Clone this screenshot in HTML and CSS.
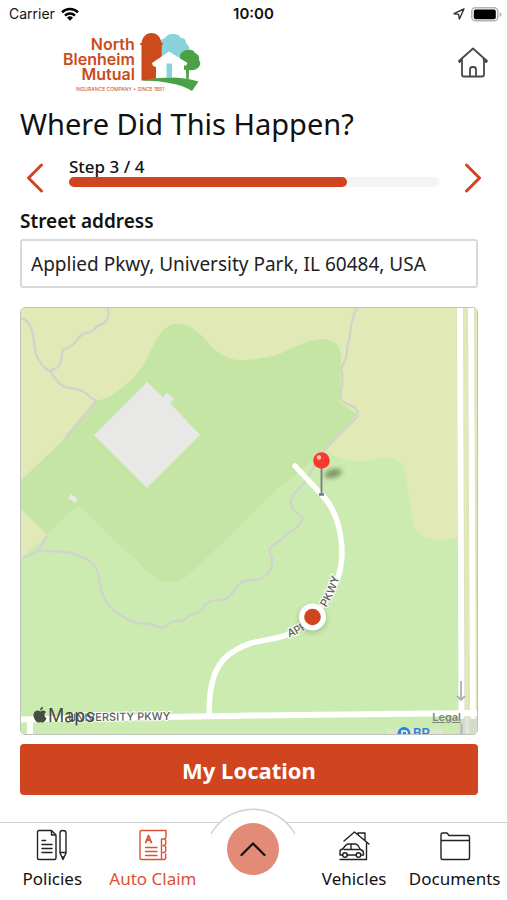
FILE: index.html
```html
<!DOCTYPE html>
<html lang="en">
<head>
<meta charset="utf-8">
<meta name="viewport" content="width=device-width, initial-scale=1">
<title>Auto Claim - Where Did This Happen?</title>
<link rel="stylesheet" href="styles.css">
</head>
<body>
<div class="app">
  <div class="status">
    <div class="status-left">
      <span>Carrier</span>
      <svg width="18" height="14" viewBox="0 0 18 14" aria-hidden="true">
        <g fill="none" stroke="#000" stroke-width="2.5"><path d="M1 5.4A11.4 11.4 0 0 1 17 5.4"/><path d="M4 8.6A7.2 7.2 0 0 1 14 8.6"/></g>
        <path d="M9 13.8 6 10.8a4.3 4.3 0 0 1 6 0z" fill="#000"/>
      </svg>
    </div>
    <span class="status-time">10:00</span>
    <div class="status-right">
      <svg width="12" height="12" viewBox="0 0 12 12" aria-hidden="true"><path d="M11 1 1 5.7l4.6.7.8 4.6z" fill="none" stroke="#333" stroke-width="1.4" stroke-linejoin="round"/></svg>
      <svg width="31" height="15" viewBox="0 0 31 15" aria-hidden="true"><rect x=".8" y=".8" width="26" height="13" rx="3.6" fill="#fff" stroke="#b4b4b4" stroke-width="1.5"/><rect x="2.8" y="2.6" width="22" height="9.6" rx="1.8"/><path d="M28.6 5v5q2-.8 2-2.500t-2-2.500z" fill="#b4b4b4"/></svg>
    </div>
  </div>

  <header class="header">
    <a class="logo" href="#" aria-label="North Blenheim Mutual">
      <span class="logo-name">North<br>Blenheim<br>Mutual</span>
      <svg class="logo-art" width="62" height="59" viewBox="0 0 62 59" aria-hidden="true">
        <path d="M21 28V10q-1-4 4-5 2-4 8-4 6 0 8 4 5 0 5 5 4 3 3 8l-4 10z" fill="#8ad3da"/>
        <path d="M1.500 47.500V12H.3v-2H1.500C2.500 3 7 0 11.500 0S20.500 3 21.500 10h1.200v2H21.700v35z" fill="#cb4b1b"/>
        <path d="M40 22q3-5 7-5 6-1 8 3 5 2 4 7 3 4-1 8-4 3-9 2l-.3 9.500h-2.400L46 37q-4 0-6-3z" fill="#4aa147"/>
        <path d="M29 18.500 47.500 30l-1.500 3-2-1v14.500H16V34l-3-1-1-3z" fill="#fff"/>
        <path d="M26.500 30.500h5.500v14h-5.500z" fill="#8ad3da"/>
        <path d="M1.500 47.500q14-3 28-3 16 0 29 4L52 58Q36 48 1.500 47.500z" fill="#4aa147"/>
      </svg>
      <span class="logo-tag">INSURANCE COMPANY • SINCE 1851</span>
    </a>
    <a class="home" href="#" aria-label="Home">
      <svg width="30" height="32" viewBox="0 0 30 32" fill="none" stroke="#484848" stroke-width="1.800" stroke-linecap="round" stroke-linejoin="round" aria-hidden="true">
        <path d="M4 12.500 1.500 15 1 14 15 1.500 29 14l-1 1-2.500-2.500"/><path d="M4 14v13.500q0 2 2 2h18q2 0 2-2V14"/><path d="M12 29v-6.500q0-2.500 2.500-2.500h1q2.500 0 2.500 2.500V29"/>
      </svg>
    </a>
  </header>

  <main class="main">
    <h1 class="title">Where Did This Happen?</h1>

    <div class="steps">
      <button class="step-btn" type="button" aria-label="Previous step">
        <svg width="18" height="30" viewBox="0 0 18 30" aria-hidden="true"><path d="M15.500 2 2.500 15l13 13"/></svg>
      </button>
      <div class="step-info">
        <span class="step-label" id="step">Step 3 / 4</span>
        <div class="track" role="progressbar" aria-labelledby="step" aria-valuemin="0" aria-valuemax="4" aria-valuenow="3"><div class="fill" style="width:75%"></div></div>
      </div>
      <button class="step-btn" type="button" aria-label="Next step">
        <svg width="18" height="30" viewBox="0 0 18 30" aria-hidden="true"><path d="m2.500 2 13 13-13 13"/></svg>
      </button>
    </div>

    <label class="label" for="address">Street address</label>
    <input class="address" id="address" type="text" value="Applied Pkwy, University Park, IL 60484, USA">

    <div class="map">
      <svg class="map-art" viewBox="21 308 456 426" preserveAspectRatio="xMidYMid slice" role="img" aria-label="Map of Applied Pkwy">
        <defs>
          <filter id="soft" x="-50%" y="-50%" width="200%" height="200%"><feGaussianBlur stdDeviation="2.500"/></filter>
          <path id="pkwy" d="M289 637.500C322 627 340 592 344 552"/>
          <path id="uni" d="M68 721.500 200 719.500"/>
        </defs>
        <rect x="0" y="300" width="507" height="450" fill="#e1eab6"/>
        <path d="M21 480.500 66 437 96 401Q113 398 133 378C148 362 152 345 160 334Q168 323 178 323.500C196 325 206 341 214 349C230 363 246 361 262 358C288 355 300 339 324 339Q341 341 341 358L340 402 357 414 325 452 290 560 100 610 47 535 21 509z" fill="#c4e5a4"/>
        <path d="M21 558 47 535 78 505 148 572Q166 590 188 576L280 487 325 450C336 458 352 465 374 459Q403 453 406 473L411 512Q413 540 440 540L458 538V734H21z" fill="#ccebb0"/>
        <path d="M21 719 477 714V734H21z" fill="#ccebb0"/>
        <path d="M463 717h14v17h-14z" fill="#e2e3dc"/>
        <path d="m147 382 16 15 4-4 7 6-4 4 30 32-53 53-53-53z" fill="#e8e8e7"/>
        <path d="m68 498 3-4 7 5-3 4z" fill="#e8e8e7"/>
        <g fill="none" stroke-linejoin="round" stroke-linecap="round">
          <path id="trail" stroke="#d0d4ca" stroke-width="2.400" d="M21 318C36 323 33 345 36 354Q40 366 51 372C59 384 60 387 75 389Q84 390 90 397L96 401 66 437M51 370C66 367 59 353 64 349C78 347 76 334 86 333Q93 332 97 326C108 323 109 318 108 308M357 308Q352 318 351 326C351 336 347 343 347 352Q346 361 341 368Q344 376 341 390C338 405 349 403 355 408Q361 413 355 419L325 449 314 466 305 482C299 489 287 497 292 507Q295 513 302 516Q304 525 285 535C278 546 268 543 270 553Q276 567 266 575Q261 580 250 580L242 582C235 586 233 598 222 600Q209 599 204 606Q199 615 193 614C188 614 187 620 181 621Q171 620 167 626Q161 630 154 625Q147 623 136 623C119 616 106 607 101 590C99 580 99 570 94 565C77 549 55 551 38 551L23 558M38 551 47 536"/>
          <g stroke="#d4dcc5" stroke-width="7">
            <path d="M460 304 461.500 738M471 304 473 738"/>
          </g>
          <g stroke="#fff" stroke-width="6">
            <path d="M295 466 321 494C341 513 348 556 336 582Q323 613 293 632C275 642 254 638 236 650C216 660 209 681 209 714" stroke-width="5.500"/>
            <path d="M18 719.500 255 715.500 480 713M30 720V738M460 304 461.500 716M471 304 473 716"/>
          </g>
        </g>
        <path d="M461 681v19m-4-4 4 4 4-4M461.500 724v12" fill="none" stroke="#b2aeb1" stroke-width="1.800"/>
        <text class="road"><textPath href="#pkwy">APPLIED PKWY</textPath></text>
        <text class="road"><textPath href="#uni">UNIVERSITY PKWY</textPath></text>
        <rect x="387" y="729" width="56" height="8" fill="#dfe5d0"/>
        <circle cx="404" cy="733.500" r="6.500" fill="#2e83e0"/>
        <path d="M402 737v-6h3q2 0 2 2t-2 2h-3" fill="none" stroke="#fff" stroke-width="1.500"/>
        <text class="poi" x="413" y="738">BP</text>
        <ellipse cx="333" cy="473.500" rx="9" ry="4" transform="rotate(-15 333 473)" fill="#52683c" opacity=".7" filter="url(#soft)"/>
        <path d="M321.500 466v28" stroke="#777d83" stroke-width="1.800"/><path d="M319 494.500h5" stroke="#707982" stroke-width="2.400"/>
        <circle cx="321.500" cy="460.500" r="8.300" fill="#fb392f"/><circle cx="319" cy="457.500" r="2.200" fill="#ffc4bf"/>
        <circle cx="312.500" cy="619" r="14" fill="#718663" opacity=".4" filter="url(#soft)"/>
        <circle cx="312.500" cy="617" r="13.500" fill="#fff"/><circle cx="312.500" cy="617" r="8.300" fill="#d0451f"/>
        <g fill="#454d40">
          <path d="M40.500 711.500Q43.500 709.500 46 712Q42.500 715 46.500 718.500Q44 724 40.500 722Q37 724 34.500 719C31.500 712.500 36 708.500 40.500 711.500zM40 710.500Q40 707.500 43 706.800Q43 710 40 710.500z"/>
          <text class="brand" x="48" y="722">Maps</text>
        </g>
      </svg>
      <a class="legal" href="#">Legal</a>
    </div>

    <button class="primary" type="button">My Location</button>
  </main>

  <nav class="nav" aria-label="Main">
    <a class="tab" href="#">
      <svg width="32" height="32" viewBox="0 0 32 32" aria-hidden="true">
        <path d="M15.500 1.500H3q-1.500 0-1.500 1.500v26q0 1.500 1.500 1.500h15.500q1.500 0 1.500-1.500V6zM15.500 1.500V6H20M6 11.500h3.500M6 15.500h10M6 19.500h10M6 23.500h10M24 24V4q0-2.500 3-2.500T30 4v20l-3 6.500zM24 23.500h6M26 28h2"/>
      </svg>
      <span>Policies</span>
    </a>
    <a class="tab active" href="#">
      <svg width="32" height="32" viewBox="0 0 32 32" aria-hidden="true">
        <path d="M24.500 30.500H4.500q-1.500 0-1.500-1.500V3q0-1.500 1.500-1.500H29V8.500L27.500 10h-3v20.500M27.500 10l1.200 1v4l-1.200 1.500h-1.500M27.500 16.500l1.200 1.500v4l-1.200 1.500h-1.500M28.700 25v4l-1.200 1.500h-3M8.500 18.500h11.500M8.500 22.500h11.500M8.500 26.500h11.500"/><path d="m8.700 13.500 2.800-7 2.800 7M9.700 11h3.600" stroke-width="1.800"/>
      </svg>
      <span>Auto Claim</span>
    </a>
    <div class="tab-center">
      <svg class="arc" width="88" height="28" viewBox="0 0 88 28" aria-hidden="true"><path d="M2 26A48 48 0 0 1 86 26" fill="#fff" stroke="#d0d0d0" stroke-width="1.400"/></svg>
      <button class="up" type="button" aria-label="Open menu">
        <svg width="28" height="16" viewBox="0 0 28 16" aria-hidden="true"><path d="M2.500 14 14 2.500 25.500 14" fill="none" stroke="#111" stroke-width="2.200" stroke-linecap="round" stroke-linejoin="round"/></svg>
      </button>
    </div>
    <a class="tab" href="#">
      <svg width="32" height="32" viewBox="0 0 32 32" aria-hidden="true">
        <path d="M6 12 16.500 3 31 15M20 5.500V4h7v7.500M28.500 14v16.500H2M2 26v-3.500q0-2 2.500-2.500L8 16q1-1 3-1h6q2 0 3 1.500l2.500 4q3 1 3 3.500V26h-2.500M2 26h2.500M9 26h9M6 20.500h16M13 15v5.500"/><circle cx="7" cy="26" r="2.300"/><circle cx="20.500" cy="26" r="2.300"/>
      </svg>
      <span>Vehicles</span>
    </a>
    <a class="tab" href="#">
      <svg width="32" height="32" viewBox="0 0 32 32" aria-hidden="true">
        <path d="M2 28.500V5.500q0-1.500 1.500-1.500H8l2 2.500h19q1.500 0 1.500 1.500v21q0 1.500-1.500 1.500H3.500Q2 30.500 2 28.500zM2 11.500h28.500"/>
      </svg>
      <span>Documents</span>
    </a>
  </nav>
</div>
</body>
</html>
```
FILE: styles.css
```css
* { box-sizing: border-box; }

body {
  margin: 0;
  background: #fff;
  color: #111;
  font-family: "Noto Sans", sans-serif;
}

a { color: inherit; text-decoration: none; }
svg { display: block; flex: none; }
button { padding: 0; border: 0; background: none; font: inherit; cursor: pointer; }

.app {
  display: flex;
  flex-direction: column;
  min-height: 100vh;
}

.status {
  display: grid;
  grid-template-columns: 1fr auto 1fr;
  align-items: center;
  height: 28px;
  padding: 0 5px;
  font: 14px/20px Inter, sans-serif;
}
.status-left, .status-right { display: flex; align-items: center; gap: 6px; }
.status-left { padding-left: 4px; }
.status-right { justify-content: flex-end; }
.status-time { font-size: 15px; font-weight: 600; }

.header {
  display: flex;
  justify-content: space-between;
  align-items: flex-start;
  padding: 5px 19px 0 63px;
}
.logo {
  display: grid;
  grid-template-columns: auto auto;
  grid-template-rows: 1fr auto;
  column-gap: 5px;
  color: #cb4b1b;
}
.logo-name {
  padding-top: 4px;
  font: 600 16px/15px Inter, sans-serif;
  text-align: right;
}
.logo-art { grid-row: 1 / 3; grid-column: 2; }
.logo-tag {
  grid-row: 2;
  grid-column: 1 / 3;
  margin-left: 13px;
  font: 5px/6px Inter, sans-serif;
}
.home { padding-top: 14px; }

.main {
  display: flex;
  flex: 1;
  flex-direction: column;
  padding: 12px 29px 27px 20px;
}
.title { margin: 0; font-size: 29px; line-height: 40px; font-weight: 400; }

.steps {
  display: flex;
  align-items: flex-end;
  gap: 25px;
  margin: 12px -4px 0 6px;
}
.step-btn path {
  fill: none;
  stroke: #d0451f;
  stroke-width: 3;
  stroke-linecap: round;
  stroke-linejoin: round;
}
.step-info { flex: 1; padding-bottom: 6px; }
.step-label { display: block; font-size: 17px; line-height: 21px; font-weight: 500; }
.track { height: 10px; border-radius: 5px; background: #f4f4f4; }
.fill { height: 100%; border-radius: 5px; background: #d0451f; }

.label { margin-top: 14px; font-size: 19px; line-height: 28px; font-weight: 600; }
.address {
  width: 100%;
  height: 49px;
  margin-top: 4px;
  padding: 0 9px;
  border: 2px solid #d9d9d9;
  border-radius: 3px;
  background: #fff;
  color: #222;
  font: 19px/28px "Noto Sans", sans-serif;
}

.map {
  position: relative;
  flex: 1;
  min-height: 426px;
  margin-top: 19px;
  border: 1px solid #bfc2ba;
  border-radius: 5px;
  overflow: hidden;
}
.map-art { position: absolute; inset: 0; width: 100%; height: 100%; }
.road {
  fill: #5b5d5a;
  stroke: #fff;
  stroke-width: 2px;
  paint-order: stroke;
  font: 500 11px Inter, sans-serif;
}
.poi { fill: #2e83e0; font: 600 13px Inter, sans-serif; }
.brand { font: 18px Inter, sans-serif; }
.legal {
  position: absolute;
  right: 16px;
  bottom: 10px;
  color: #7e867a;
  font: 600 11px/14px Inter, sans-serif;
  text-decoration: underline;
}

.primary {
  height: 51px;
  margin-top: 9px;
  border-radius: 4px;
  background: #d0451f;
  color: #fff;
  font-size: 22px;
  line-height: 30px;
  font-weight: 700;
}

.nav {
  display: grid;
  grid-template-columns: repeat(5, 1fr);
  height: 78px;
  padding: 0 2px;
  border-top: 1px solid #d0d0d0;
}
.tab {
  display: flex;
  flex-direction: column;
  align-items: center;
  gap: 6px;
  padding-top: 6px;
  font-size: 17px;
  line-height: 24px;
}
.tab svg { fill: none; stroke: #222; stroke-width: 1.4; stroke-linejoin: round; stroke-linecap: round; }
.active { color: #df4f33; }
.active svg { stroke: #df4f33; }
.tab-center { position: relative; display: flex; justify-content: center; align-items: flex-start; }
.arc { position: absolute; top: -15px; left: 50%; margin-left: -44px; }
.up {
  position: relative;
  display: grid;
  place-items: center;
  width: 52px;
  height: 52px;
  border-radius: 50%;
  background: #e28b76;
}
```
